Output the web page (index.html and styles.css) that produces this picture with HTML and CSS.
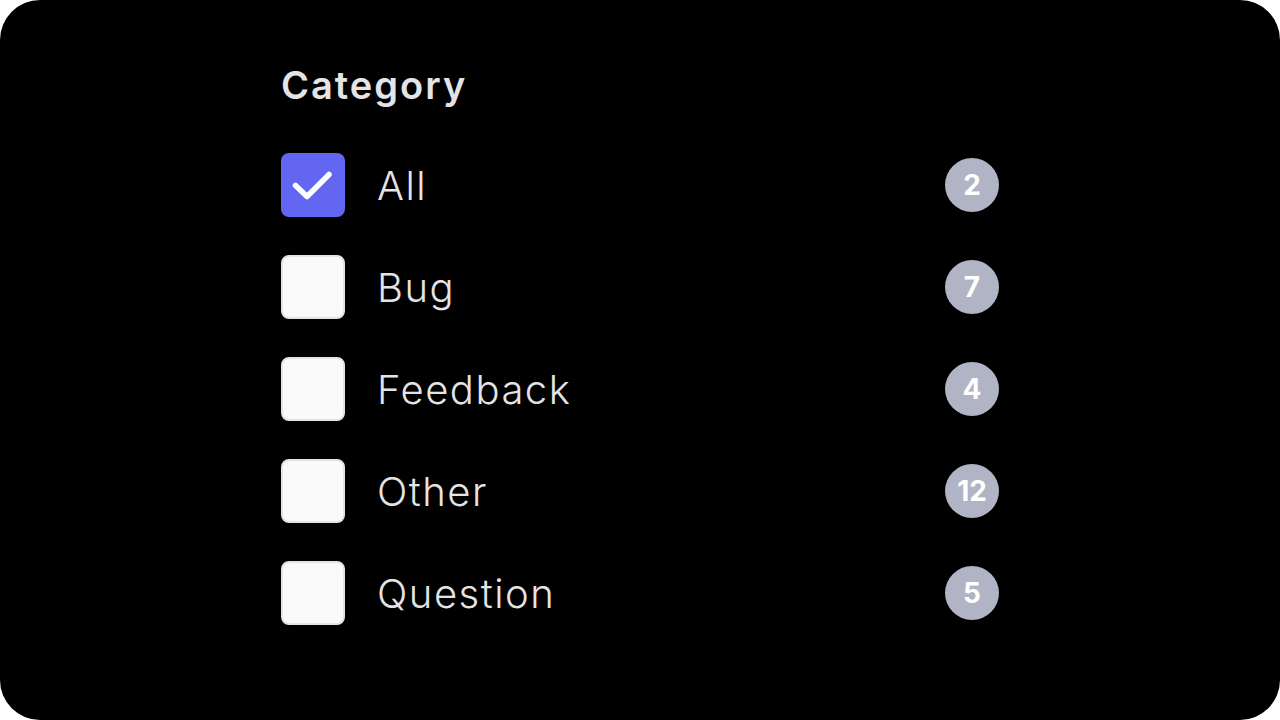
FILE: index.html
```html
<!DOCTYPE html>
<html lang="en">
<head>
<meta charset="utf-8">
<title>Category filter</title>
<link rel="stylesheet" href="styles.css">
</head>
<body>
<main class="frame">
  <section class="panel">
    <h2 class="title">Category</h2>
    <ul class="list">
      <li class="row">
        <span class="box checked">
          <svg viewBox="0 0 64 64" width="64" height="64" aria-hidden="true"><path d="M14.5 32.5 L26 43.5 L48 21.5" fill="none" stroke="#fff" stroke-width="5.5" stroke-linecap="round" stroke-linejoin="round"/></svg>
        </span>
        <span class="label">All</span>
        <span class="badge">2</span>
      </li>
      <li class="row">
        <span class="box"></span>
        <span class="label">Bug</span>
        <span class="badge">7</span>
      </li>
      <li class="row">
        <span class="box"></span>
        <span class="label">Feedback</span>
        <span class="badge">4</span>
      </li>
      <li class="row">
        <span class="box"></span>
        <span class="label">Other</span>
        <span class="badge">12</span>
      </li>
      <li class="row">
        <span class="box"></span>
        <span class="label">Question</span>
        <span class="badge">5</span>
      </li>
    </ul>
  </section>
</main>
</body>
</html>
```
FILE: styles.css
```css
html, body {
  margin: 0;
  padding: 0;
  background: #ffffff;
}
.frame {
  width: 1280px;
  height: 720px;
  background: #000000;
  border-radius: 40px;
  display: flex;
  justify-content: center;
  font-family: "Inter", "Noto Sans", sans-serif;
}
.panel {
  width: 718px;
  padding-top: 59px;
}
.title {
  margin: 0;
  color: #e4e4e7;
  font-size: 38px;
  font-weight: 600;
  letter-spacing: 2px;
  line-height: 52px;
}
.list {
  list-style: none;
  margin: 42px 0 0;
  padding: 0;
  display: flex;
  flex-direction: column;
  gap: 38px;
}
.row {
  display: flex;
  align-items: center;
  height: 64px;
}
.box {
  width: 64px;
  height: 64px;
  box-sizing: border-box;
  border-radius: 8px;
  background: #fafafa;
  border: 2px solid #e4e4e7;
  flex: none;
}
.box.checked {
  background: #6366f1;
  border: none;
}
.box svg { display: block; }
.label {
  margin-left: 32px;
  flex: 1;
  color: #e4e4e7;
  font-size: 40px;
  font-weight: 300;
  letter-spacing: 1.5px;
}
.badge {
  width: 54px;
  height: 54px;
  border-radius: 50%;
  background: #b1b4c5;
  color: #ffffff;
  font-size: 28px;
  font-weight: 700;
  display: flex;
  align-items: center;
  justify-content: center;
  flex: none;
}
```
